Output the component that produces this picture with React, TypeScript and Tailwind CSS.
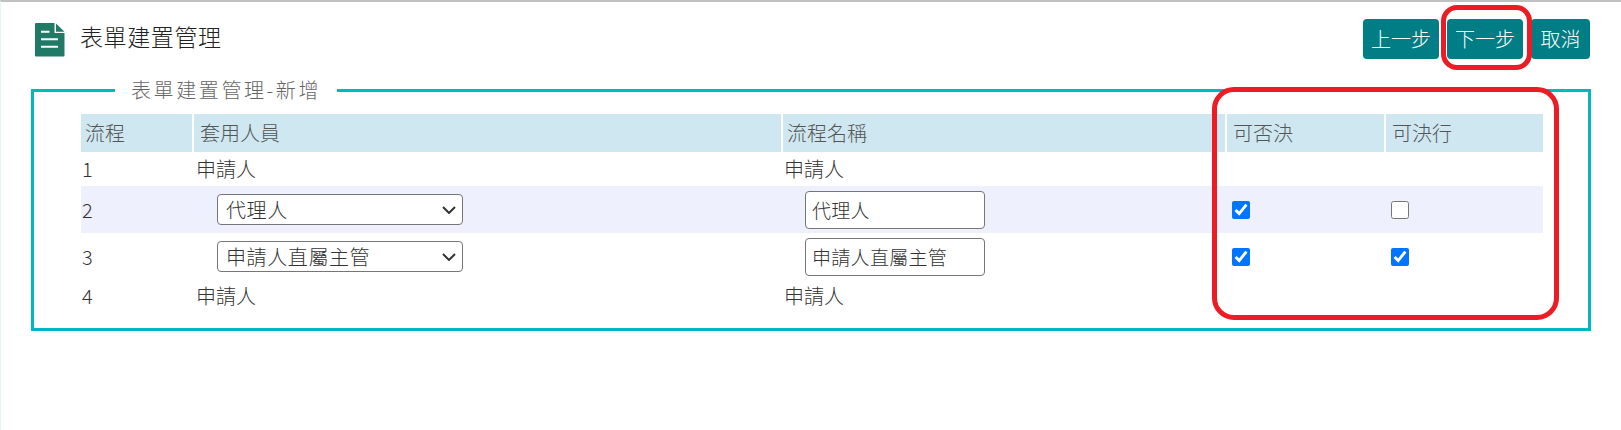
import React from "react";

const font = { fontFamily: '"Noto Sans CJK TC", "Noto Sans", sans-serif' };

function DocIcon() {
  return (
    <svg width="30" height="34" viewBox="0 0 30 34" className="shrink-0">
      <path d="M1 0H19.5V10H29.5V32.5a1 1 0 0 1-1 1H1a1 1 0 0 1-1-1V1a1 1 0 0 1 1-1Z" fill="#207a66" />
      <path d="M21 0.5V8.7H29.5Z" fill="#207a66" />
      <path d="M6 8.7H14.5M6 16.3H23M6 23.7H23" stroke="#fff" strokeWidth="2" fill="none" />
    </svg>
  );
}

function Btn({ children, className }: { children: React.ReactNode; className: string }) {
  return (
    <button className={`h-10 rounded-[4px] bg-[#007d85] text-[20px] leading-10 font-light text-white ${className}`}>
      {children}
    </button>
  );
}

function Sel({ value }: { value: string }) {
  return (
    <div className="relative h-[31px] w-[246px]">
      <select
        defaultValue={value}
        className="block h-[31px] w-[246px] appearance-none rounded-[4px] border border-[#767676] bg-white pl-[8px] tracking-[0.6px]"
      >
        <option>{value}</option>
      </select>
      <svg width="14" height="8" viewBox="0 0 14 8" className="pointer-events-none absolute top-[12px] right-[7px]">
        <path d="M1 1L7 7L13 1" stroke="#333" strokeWidth="2" fill="none" />
      </svg>
    </div>
  );
}

const boxInput = "block h-[38px] w-[180px] rounded-[4px] border border-[#767676] bg-white px-[6px] text-[19px] tracking-[0.3px]";
const check = "mt-[1px] block h-[18px] w-[18px]";

export default function App() {
  return (
    <div
      style={font}
      className="relative h-[430px] w-[1621px] overflow-hidden border-t-2 border-l border-t-[#c0c0c0] border-l-[#e2f5f8] bg-white font-light text-[#333]"
    >
      <div className="flex items-start justify-between pt-[17px] pr-[31px] pl-[34px]">
        <div className="flex items-start gap-[15px] pt-1">
          <DocIcon />
          <span className="-mt-[2px] text-[23px] leading-[30px] tracking-[0.6px] text-[#222]">表單建置管理</span>
        </div>
        <div className="flex gap-2">
          <Btn className="w-[76px]">上一步</Btn>
          <Btn className="w-[76px]">下一步</Btn>
          <Btn className="w-[59px]">取消</Btn>
        </div>
      </div>

      <fieldset className="mx-[30px] mt-[18px] h-[254px] border-[3px] border-[#00b8c0]">
        <legend className="ml-[81px] px-[16px] text-[20px] leading-[26px] tracking-[2.6px] text-[#666]">
          表單建置管理-新增
        </legend>
        <table className="mt-[11px] ml-[47px] w-[1462px] table-fixed border-collapse text-[20px]">
          <colgroup>
            <col className="w-[112px]" />
            <col className="w-[589px]" />
            <col className="w-[444px]" />
            <col className="w-[159px]" />
            <col className="w-[158px]" />
          </colgroup>
          <thead>
            <tr className="h-[38px] bg-[#cfe7f0] text-left text-[#555]">
              <th className="border-r-2 border-white pl-[4px] font-light">流程</th>
              <th className="border-r-2 border-white pl-[6px] font-light">套用人員</th>
              <th className="border-r-2 border-white pl-[4px] font-light">流程名稱</th>
              <th className="border-r-2 border-white pl-[6px] font-light">可否決</th>
              <th className="pl-[6px] font-light">可決行</th>
            </tr>
          </thead>
          <tbody>
            <tr className="h-[34px]">
              <td className="pl-[1px]">1</td>
              <td className="pl-[3px]">申請人</td>
              <td className="pl-[2px]">申請人</td>
              <td></td>
              <td></td>
            </tr>
            <tr className="h-[47px] bg-[#eef0fe]">
              <td className="pl-[1px]">2</td>
              <td className="pl-[24px]">
                <Sel value="代理人" />
              </td>
              <td className="pl-[23px]">
                <input defaultValue="代理人" className={boxInput} />
              </td>
              <td className="pl-[6px]">
                <input type="checkbox" defaultChecked className={check} />
              </td>
              <td className="pl-[6px]">
                <input type="checkbox" className={check} />
              </td>
            </tr>
            <tr className="h-[47px]">
              <td className="pl-[1px]">3</td>
              <td className="pl-[24px]">
                <Sel value="申請人直屬主管" />
              </td>
              <td className="pl-[23px]">
                <input defaultValue="申請人直屬主管" className={boxInput} />
              </td>
              <td className="pl-[6px]">
                <input type="checkbox" defaultChecked className={check} />
              </td>
              <td className="pl-[6px]">
                <input type="checkbox" defaultChecked className={check} />
              </td>
            </tr>
            <tr className="h-[34px]">
              <td className="pb-[2px] pl-[1px]">4</td>
              <td className="pb-[2px] pl-[3px]">申請人</td>
              <td className="pb-[2px] pl-[2px]">申請人</td>
              <td></td>
              <td></td>
            </tr>
          </tbody>
        </table>
      </fieldset>

      <div className="pointer-events-none absolute top-[3px] left-[1440px] h-[65px] w-[91px] rounded-[16px] border-[5px] border-[#ed1c24]" />
      <div className="pointer-events-none absolute top-[85px] left-[1211px] h-[233px] w-[347px] rounded-[22px] border-[5px] border-[#ed1c24]" />
    </div>
  );
}
